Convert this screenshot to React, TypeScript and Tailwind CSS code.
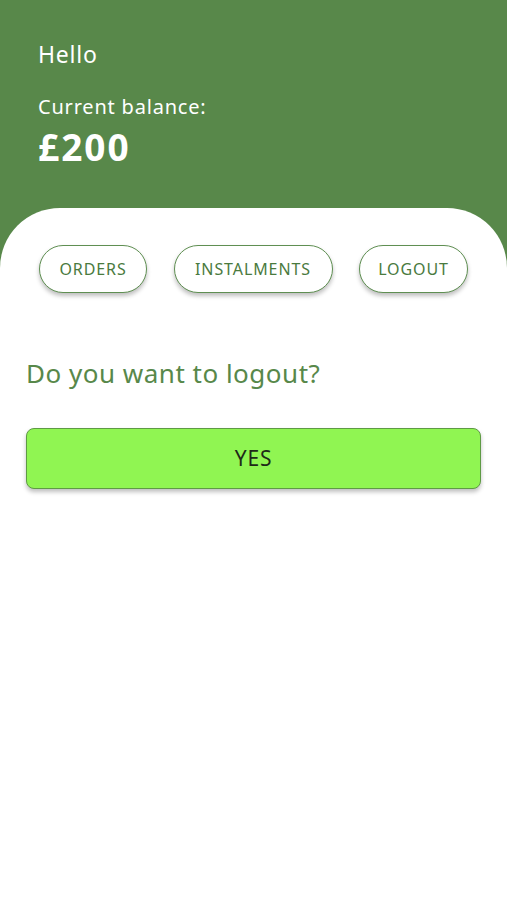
import React from 'react';

const tabs = [
  { label: 'ORDERS', w: 'w-[108px]' },
  { label: 'INSTALMENTS', w: 'w-[159px]' },
  { label: 'LOGOUT', w: 'w-[109px]' },
];

export default function App() {
  return (
    <div
      className="min-h-[900px] w-full bg-white"
      style={{ fontFamily: '"Noto Sans", Lato, sans-serif' }}
    >
      <div className="bg-[#58884a] px-[38px] pt-[38px] pb-[42px] text-white">
        <div className="text-[23px] leading-[32px] tracking-[0.8px]">Hello</div>
        <div className="mt-[24px] text-[20px] leading-[26px] tracking-[0.8px]">Current balance:</div>
        <div className="mt-[5px] text-[37px] font-bold leading-[44px] tracking-[2px]">£200</div>
      </div>

      <div className="-mt-[3px] bg-[#58884a]">
        <div className="rounded-t-[60px] bg-white pt-[37px]">
          <div className="flex items-center justify-between px-[39px]">
            {tabs.map((t) => (
              <button
                key={t.label}
                className={`${t.w} h-[48px] rounded-full border-[1.5px] border-[#5f8f52] bg-white text-[16px] tracking-[0.9px] text-[#4a7a3e] shadow-[0_3px_4px_rgba(0,0,0,0.25)]`}
              >
                {t.label}
              </button>
            ))}
          </div>
        </div>
      </div>

      <div className="px-[26px] pt-[62px]">
        <div className="text-[26px] leading-[36px] tracking-[0.5px] text-[#58884a]">Do you want to logout?</div>
        <button className="mt-[37px] flex h-[61px] w-full items-center justify-center rounded-[8px] border border-[#5f9a45] bg-[#90f552] text-[21px] tracking-[0.8px] text-[#1e2a18] shadow-[0_3px_4px_rgba(0,0,0,0.25)]">
          YES
        </button>
      </div>
    </div>
  );
}
